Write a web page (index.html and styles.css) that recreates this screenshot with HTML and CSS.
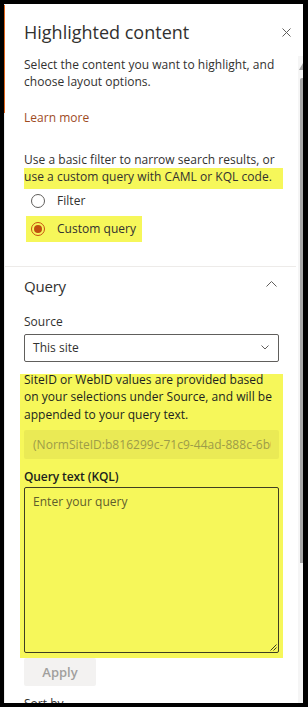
FILE: index.html
```html
<!DOCTYPE html>
<html lang="en">
<head>
<meta charset="utf-8">
<title>Highlighted content</title>
<link rel="stylesheet" href="styles.css">
</head>
<body>
<div class="panel">
  <header class="pane-header">
    <h1 class="pane-title">Highlighted content</h1>
    <button class="close" aria-label="Close">
      <svg width="9" height="9" viewBox="0 0 9 9"><path d="M0.5 0.5L8.5 8.5M8.5 0.5L0.5 8.5" stroke="#605e5c" stroke-width="1" fill="none"/></svg>
    </button>
  </header>
  <div class="pane-body">
    <div class="scroll-content">
      <p class="desc">Select the content you want to highlight, and choose layout options.</p>
      <a class="learn">Learn more</a>
      <p class="filter-desc"><span class="line">Use a basic filter to narrow search results, or</span><span class="line hl-line">use a custom query with CAML or KQL code.</span></p>
      <div class="radios">
        <label class="radio"><span class="circle"></span><span class="radio-text">Filter</span></label>
        <label class="radio checked hl-radio"><span class="circle"></span><span class="radio-text">Custom query</span></label>
      </div>
      <hr class="divider">
      <div class="group-head">
        <span>Query</span>
        <svg class="chev-up" width="11" height="6" viewBox="0 0 11 6"><path d="M0.5 5.5L5.5 0.5L10.5 5.5" stroke="#605e5c" stroke-width="1" fill="none"/></svg>
      </div>
      <div class="field-label">Source</div>
      <div class="dropdown">
        <span>This site</span>
        <svg width="8" height="5" viewBox="0 0 8 5"><path d="M0.5 0.5L4 4L7.5 0.5" stroke="#605e5c" stroke-width="1" fill="none"/></svg>
      </div>
      <div class="hl-block">
        <p class="note">SiteID or WebID values are provided based on your selections under Source, and will be appended to your query text.</p>
        <div class="readonly"><span class="readonly-text">(NormSiteID:b816299c-71c9-44ad-888c-6b0d1a2e</span></div>
        <div class="field-label strong">Query text (KQL)</div>
        <div class="textarea">
          <span class="placeholder">Enter your query</span>
          <svg class="grip" width="8" height="8" viewBox="0 0 8 8"><path d="M7.5 1.5L1.5 7.5M7.5 4.5L4.5 7.5" stroke="#3f3e22" stroke-width="1" fill="none"/></svg>
        </div>
      </div>
      <button class="apply">Apply</button>
      <div class="field-label sort">Sort by</div>
    </div>
    <div class="scrollbar">
      <svg width="5" height="647" viewBox="0 0 5 647"><path d="M1 14L5 7L5 14Z" fill="#a3a3a3"/><path d="M2 24Q2 22 4 22H5V507H2Z" fill="#a6a6a6"/></svg>
    </div>
  </div>
</div>
</body>
</html>
```
FILE: styles.css
```css
html, body {
  margin: 0;
}
body {
  background: #000;
  padding: 4px 5px 4px 4px;
  height: 707px;
  box-sizing: border-box;
  font-family: "Open Sans", "Noto Sans", sans-serif;
  color: #323130;
  overflow: hidden;
}
.panel {
  height: 699px;
  background: #fff;
  border-left: 1px solid #ececec;
  display: flex;
  flex-direction: column;
  position: relative;
}
.panel::before {
  content: "";
  position: absolute;
  left: -1px;
  top: 1px;
  width: 1px;
  height: 108px;
  background: #e0651c;
}
.pane-header {
  height: 52px;
  box-sizing: border-box;
  padding: 16px 12px 12px 19px;
  display: flex;
  align-items: center;
  justify-content: space-between;
  flex: none;
}
.pane-title {
  margin: 0;
  font-size: 18px;
  line-height: 24px;
  font-weight: 400;
  color: #323130;
}
.close {
  border: 0;
  background: none;
  padding: 0;
  width: 9px;
  height: 9px;
  display: flex;
}
.pane-body {
  flex: 1;
  display: flex;
  overflow: hidden;
  min-height: 0;
}
.scroll-content {
  flex: 1;
  min-width: 0;
  padding: 0 19px;
  font-size: 12px;
  line-height: 17px;
  letter-spacing: 0.03px;
}
.scrollbar {
  width: 5px;
  flex: none;
  background: #f5f5f5;
  display: flex;
}
.desc {
  margin: 0;
}
.learn {
  display: block;
  margin-top: 19px;
  color: #9e4b1f;
}
.filter-desc {
  margin: 24.5px 0 0;
}
.line {
  display: block;
  white-space: nowrap;
}
.hl-line {
  width: 259px;
  box-sizing: border-box;
  background: #f6f75a;
  padding-bottom: 4px;
}
.radios {
  margin-top: 2px;
  display: flex;
  flex-direction: column;
  gap: 5px;
}
.radio {
  display: flex;
  align-items: center;
  gap: 12px;
  height: 20px;
  margin-left: 2px;
  padding-left: 5px;
}
.hl-radio {
  height: 26px;
  box-sizing: border-box;
  width: fit-content;
  background: #f6f75a;
  padding: 3px 6px 3px 5px;
}
.circle {
  width: 14px;
  height: 14px;
  box-sizing: border-box;
  border: 1px solid #605e5c;
  border-radius: 50%;
  display: flex;
  align-items: center;
  justify-content: center;
  flex: none;
}
.checked .circle {
  border-color: #c8500f;
}
.checked .circle::after {
  content: "";
  width: 8px;
  height: 8px;
  border-radius: 50%;
  background: #c0500f;
}
.divider {
  margin: 24px -17px 0 -19px;
  border: 0;
  border-top: 1px solid #edebe9;
  height: 0;
}
.group-head {
  padding-top: 8px;
  display: flex;
  align-items: center;
  justify-content: space-between;
  font-size: 15px;
  line-height: 22px;
  letter-spacing: -0.2px;
}
.chev-up {
  margin-right: 2px;
  margin-top: -3px;
}
.field-label {
  margin-top: 16px;
}
.dropdown {
  margin-top: 4px;
  height: 28px;
  box-sizing: border-box;
  border: 1px solid #605e5c;
  border-radius: 2px;
  padding: 0 9px 0 8px;
  display: flex;
  align-items: center;
  justify-content: space-between;
}
.hl-block {
  margin: 12px -4px 0;
  padding: 0 4px 5px;
  background: #f6f75a;
  display: flow-root;
}
.note {
  margin: -2.5px 0 0;
  line-height: 17.25px;
  color: #201f1e;
}
.readonly {
  margin-top: 6.75px;
  height: 29px;
  line-height: 29px;
  background: #eaea55;
  color: #9d9c48;
  padding: 0 8px 0 9px;
  border-radius: 2px;
}
.readonly-text {
  display: block;
  white-space: nowrap;
  overflow: hidden;
}
.field-label.strong {
  margin-top: 9.3px;
  font-weight: 600;
  color: #201f1e;
  letter-spacing: -0.1px;
}
.textarea {
  margin-top: 2.7px;
  height: 166px;
  box-sizing: border-box;
  border: 1px solid #3f3e22;
  border-radius: 2px;
  padding: 5px 8px;
  position: relative;
}
.placeholder {
  color: #5f5d2c;
}
.grip {
  position: absolute;
  right: 1px;
  bottom: 1px;
}
.apply {
  display: block;
  width: 72px;
  height: 28px;
  border: 0;
  border-radius: 2px;
  background: #f3f2f1;
  color: #a19f9d;
  font-family: inherit;
  font-size: 13px;
  font-weight: 600;
  padding: 0;
}
.field-label.sort {
  margin-top: 8.7px;
}
```
